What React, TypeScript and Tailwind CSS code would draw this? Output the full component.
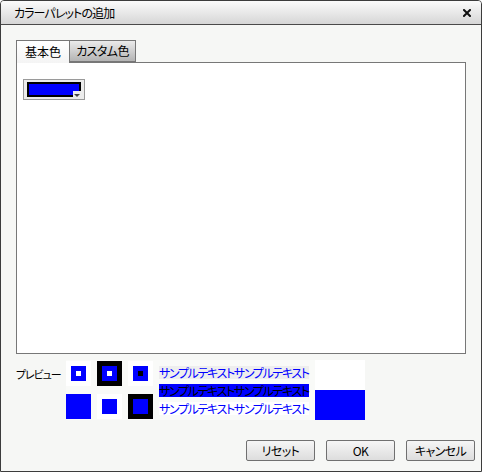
import React from 'react';

const font = "font-['Noto_Sans_CJK_JP','Noto_Sans',sans-serif] [font-feature-settings:'palt']";

const Swatch = ({ outer, mid, inner }: { outer: string; mid: string; inner?: string }) => (
  <div className={`w-[25px] h-[25px] flex items-center justify-center ${outer}`}>
    <div className={`w-[15px] h-[15px] flex items-center justify-center ${mid}`}>
      {inner && <div className={`w-[5px] h-[5px] ${inner}`} />}
    </div>
  </div>
);

const DialogButton = ({ label }: { label: string }) => (
  <button className="w-[69px] h-[21px] border border-[#707070] rounded-[2px] bg-gradient-to-b from-[#f6f6f6] to-[#dddddd] text-[12px] tracking-[-0.6px] text-black leading-none flex items-center justify-center">
    {label}
  </button>
);

export default function App() {
  return (
    <div className={`w-[482px] h-[472px] flex flex-col bg-[#f6f7f5] border border-[#3c3c3c] rounded-tr-[4px] rounded-tl-[4px] overflow-hidden text-black ${font}`}>
      {/* title bar */}
      <div className="h-[24px] shrink-0 flex items-center justify-between pl-[13px] pr-[10px] bg-gradient-to-b from-[#fbfbfb] to-[#d6d6d6] border-b border-[#4a4a4a]">
        <span className="text-[12px] leading-none tracking-[-0.9px]">カラーパレットの追加</span>
        <svg width="8" height="8" viewBox="0 0 8 8" className="mt-[1px]">
          <path d="M1 1L7 7M7 1L1 7" stroke="#111" strokeWidth="2" strokeLinecap="square" />
        </svg>
      </div>

      <div className="flex flex-col pl-[15px] pr-[15px] pt-[15px]">
        {/* tabs */}
        <div className="flex h-[22px]">
          <div className="w-[54px] h-[23px] border border-b-0 border-[#777] bg-gradient-to-b from-[#ffffff] to-[#f4f4f4] text-[12px] leading-none flex items-center justify-center relative z-10">
            基本色
          </div>
          <div className="w-[66px] h-[22px] border border-l-0 border-[#777] bg-gradient-to-b from-[#ebebeb] to-[#b4b4b4] text-[12px] tracking-[-0.6px] leading-none flex items-center justify-center">
            カスタム色
          </div>
        </div>

        {/* panel */}
        <div className="h-[292px] border border-[#777] bg-white pl-[6px] pt-[16px]">
          <div className="w-[62px] h-[21px] border border-[#9a9a9a] bg-[#ececec] relative">
            <div className="absolute left-[3px] top-[2px] w-[54px] h-[15px] border-2 border-black bg-[#0000ff]" />
            <div className="absolute right-[3px] bottom-[0px] w-[8px] h-[8px] bg-[#ececec] flex items-center justify-center">
              <svg width="6" height="3" viewBox="0 0 6 3">
                <path d="M0 0H6L3 3Z" fill="#444" />
              </svg>
            </div>
          </div>
        </div>

        {/* preview */}
        <div className="flex mt-[6px]">
          <div className="w-[50px] pt-[9px] text-[11px] leading-none tracking-[-1.1px]">プレビュー</div>
          <div className="flex bg-[#f9faf8]">
            <div className="grid grid-cols-3 gap-x-[6px] gap-y-[6px] pt-[1px]">
              <Swatch outer="bg-white" mid="bg-[#0000ff]" inner="bg-white" />
              <Swatch outer="bg-black" mid="bg-[#0000ff]" inner="bg-white" />
              <Swatch outer="bg-white" mid="bg-[#0000ff]" inner="bg-black" />
              <Swatch outer="bg-[#0000ff]" mid="bg-[#0000ff]" />
              <Swatch outer="bg-white" mid="bg-[#0000ff]" />
              <Swatch outer="bg-black" mid="bg-[#0000ff]" />
            </div>
            <div className="flex flex-col ml-[6px] pt-[6px] text-[12px] leading-none tracking-[-1.35px]">
              <div className="h-[13px] bg-[#eeeeee] text-[#0000ff] flex items-center">サンプルテキストサンプルテキスト</div>
              <div className="h-[13px] mt-[5px] bg-[#0000ff] text-black flex items-center">サンプルテキストサンプルテキスト</div>
              <div className="h-[13px] mt-[5px] bg-white text-[#0000ff] flex items-center">サンプルテキストサンプルテキスト</div>
            </div>
            <div className="flex flex-col ml-[6px]">
              <div className="w-[50px] h-[30px] bg-white" />
              <div className="w-[50px] h-[30px] bg-[#0000ff]" />
            </div>
          </div>
        </div>

        {/* buttons */}
        <div className="flex justify-end gap-[11px] mt-[20px] mr-[-9px]">
          <DialogButton label="リセット" />
          <DialogButton label="OK" />
          <DialogButton label="キャンセル" />
        </div>
      </div>
    </div>
  );
}
